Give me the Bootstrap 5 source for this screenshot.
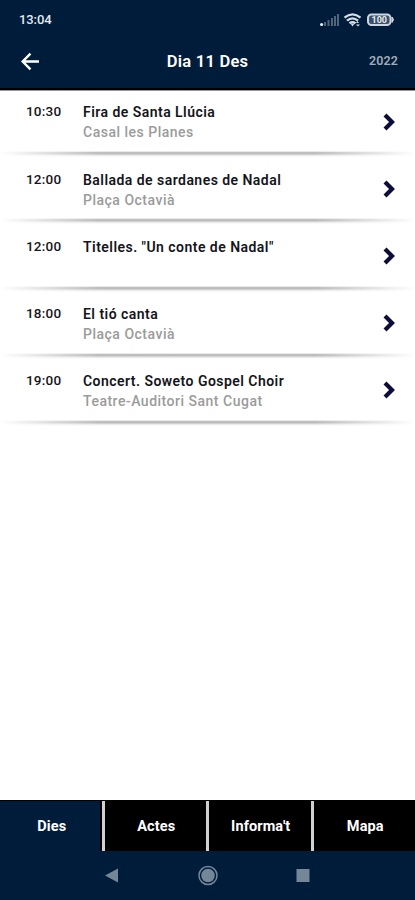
<!DOCTYPE html>
<html lang="ca">
<head>
<meta charset="utf-8">
<meta name="viewport" content="width=device-width, initial-scale=1">
<title>Dia 11 Des</title>
<link href="https://cdn.jsdelivr.net/npm/bootstrap@5.3.0/dist/css/bootstrap.min.css" rel="stylesheet">
<style>
body{font-family:Roboto,"Liberation Sans",sans-serif;height:900px;overflow:hidden;color:#15151b}
.navy{background:#001c3b}
.top-area{height:90px;border-bottom:2px solid #000}
.status-row{height:39px;padding:1px 20px 0 19px}
.clock{font-size:13px;font-weight:500;letter-spacing:-.1px;color:#e4eaf0}
.title-row{height:45px;padding:0 17px 0 20px}
.page-title{font-size:16.500px;font-weight:600;line-height:20px;letter-spacing:.25px;color:#fff;padding-right:3px}
.year{font-size:12.5px;font-weight:600;letter-spacing:.1px;color:#a0abb8}
.events{border-top:1px solid #99959d}
.event{height:67.2px;padding:11.400px 19px 0 26px}
.hour{width:57px;font-size:13.5px;font-weight:500;line-height:19px;letter-spacing:.2px}
.name{font-size:14px;font-weight:600;line-height:20px;letter-spacing:.46px}
.place{font-size:14px;font-weight:500;line-height:21px;letter-spacing:.5px;color:#9b9b9b}
.chev{margin-top:9.300px}
.shade{left:0;right:0;bottom:1px;height:6px;background:linear-gradient(90deg,#fff 0,rgba(255,255,255,0) 24%,rgba(255,255,255,0) 76%,#fff 100%),linear-gradient(180deg,#fff 0,#b2b2b2 30%,#c4c4c4 50%,#ececec 75%,#fff 100%)}
.tabs{height:51px;border-top:1px solid #000}
.tab{background:#000;color:#fff;font-size:14.500px;font-weight:700;letter-spacing:.1px;border-left:3px solid #d2cfd2;padding:2px 0 0 2px}
.tab.current{background:#001c3b;border-left:0;box-shadow:inset -2px 0 #000;padding:2px 0 0 2px}
.keys{height:49px}
</style>
</head>
<body class="d-flex flex-column bg-white">
<header class="navy top-area flex-shrink-0">
  <div class="status-row d-flex align-items-center justify-content-between">
    <span class="clock">13:04</span>
    <svg width="76" height="16" viewBox="0 0 76 16">
      <g fill="#52647b"><path d="M5 10h2v4H5zM8.500 8h2v6h-2zM12 6h2v8h-2zM15 4h2v10h-2zM18 2h2v12h-2z"/></g>
      <circle cx="2.600" cy="12.500" r="1.600" fill="#e8edf2"/>
      <g fill="none" stroke="#d5dde5" stroke-width="2.300"><path d="M25.500 5.700Q33.500-1 41.500 5.700M28 8.700Q33.500 4 39 8.700M30.500 11.300Q33.500 9 36.500 11.300"/></g>
      <path d="M31.500 11.500h4l-2 3z" fill="#d5dde5"/><path d="M37 11l1.500-2 1.500 2zM37 12.500h4l-2 2z" fill="#d5dde5"/>
      <rect x="49" y="2.500" width="22.500" height="10.500" rx="3.500" fill="#3d5067" stroke="#ccd6df" stroke-width="2"/>
      <path d="M73 5q3 2.700 0 5.500z" fill="#ccd6df" stroke="#ccd6df"/>
      <text x="60.300" y="11" text-anchor="middle" font-size="9" font-weight="700" fill="#e4eaf0">100</text>
    </svg>
  </div>
  <div class="title-row row gx-0 align-items-center">
    <div class="col"><svg width="22" height="20" viewBox="0 0 22 20" fill="none" stroke="#fff" stroke-width="2.400"><path d="M19 9.500H3M10.500 1.700L2.700 9.500l7.800 7.800"/></svg></div>
    <div class="col-auto page-title">Dia 11 Des</div>
    <div class="col text-end year">2022</div>
  </div>
</header>
<main class="events flex-grow-1">
  <div class="event d-flex position-relative"><div class="hour">10:30</div><div class="flex-grow-1"><div class="name">Fira de Santa Llúcia</div><div class="place">Casal les Planes</div></div><svg class="chev" width="13" height="20" viewBox="0 0 13 20" fill="none" stroke="#0c0d3a" stroke-width="4.200"><path d="M2 3l7 7-7 7"/></svg><div class="shade position-absolute"></div></div>
  <div class="event d-flex position-relative"><div class="hour">12:00</div><div class="flex-grow-1"><div class="name">Ballada de sardanes de Nadal</div><div class="place">Plaça Octavià</div></div><svg class="chev" width="13" height="20" viewBox="0 0 13 20" fill="none" stroke="#0c0d3a" stroke-width="4.200"><path d="M2 3l7 7-7 7"/></svg><div class="shade position-absolute"></div></div>
  <div class="event d-flex position-relative"><div class="hour">12:00</div><div class="flex-grow-1"><div class="name">Titelles. "Un conte de Nadal"</div></div><svg class="chev" width="13" height="20" viewBox="0 0 13 20" fill="none" stroke="#0c0d3a" stroke-width="4.200"><path d="M2 3l7 7-7 7"/></svg><div class="shade position-absolute"></div></div>
  <div class="event d-flex position-relative"><div class="hour">18:00</div><div class="flex-grow-1"><div class="name">El tió canta</div><div class="place">Plaça Octavià</div></div><svg class="chev" width="13" height="20" viewBox="0 0 13 20" fill="none" stroke="#0c0d3a" stroke-width="4.200"><path d="M2 3l7 7-7 7"/></svg><div class="shade position-absolute"></div></div>
  <div class="event d-flex position-relative"><div class="hour">19:00</div><div class="flex-grow-1"><div class="name">Concert. Soweto Gospel Choir</div><div class="place">Teatre-Auditori Sant Cugat</div></div><svg class="chev" width="13" height="20" viewBox="0 0 13 20" fill="none" stroke="#0c0d3a" stroke-width="4.200"><path d="M2 3l7 7-7 7"/></svg><div class="shade position-absolute"></div></div>
</main>
<nav class="tabs row g-0 flex-shrink-0">
  <div class="tab current col d-flex align-items-center justify-content-center">Dies</div>
  <div class="tab col d-flex align-items-center justify-content-center">Actes</div>
  <div class="tab col d-flex align-items-center justify-content-center">Informa't</div>
  <div class="tab col d-flex align-items-center justify-content-center">Mapa</div>
</nav>
<footer class="keys navy flex-shrink-0 d-flex justify-content-center">
  <svg width="415" height="49" viewBox="0 0 415 49" fill="#748799">
    <path d="M105 24.500L118 17.500v14z"/>
    <circle cx="208" cy="24.500" r="9" fill="none" stroke="#748799" stroke-width="1.500"/><circle cx="208" cy="24.500" r="6.800"/>
    <rect x="296.500" y="18" width="13" height="13"/>
  </svg>
</footer>
<script src="https://cdn.jsdelivr.net/npm/bootstrap@5.3.0/dist/js/bootstrap.bundle.min.js"></script>
</body>
</html>
